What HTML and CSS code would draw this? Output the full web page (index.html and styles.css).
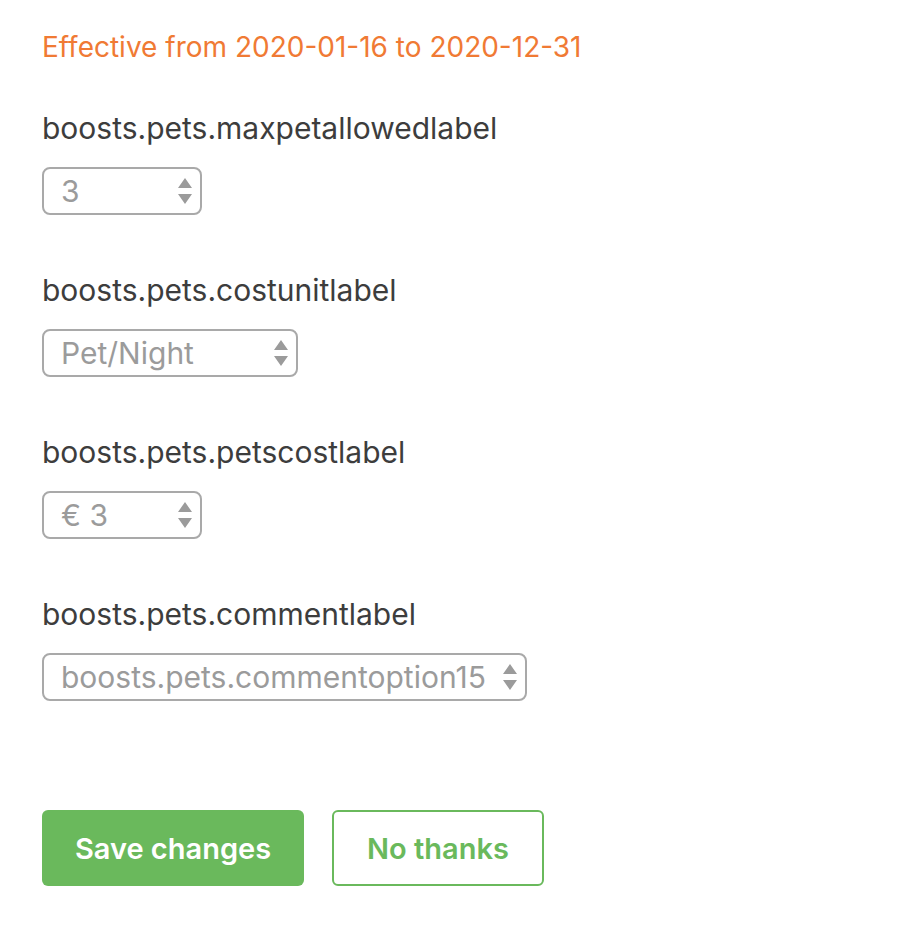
FILE: index.html
```html
<!DOCTYPE html>
<html>
<head>
<meta charset="utf-8">
<link rel="stylesheet" href="styles.css">
</head>
<body>
<div class="page">
  <div class="effective">Effective from 2020-01-16 to 2020-12-31</div>
  <div class="field">
    <div class="label">boosts.pets.maxpetallowedlabel</div>
    <div class="select w1"><span class="value">3</span><span class="arrows"><svg width="14" height="30" viewBox="0 0 14 30"><path d="M7 2 L14 12 L0 12 Z M0 18 L14 18 L7 28 Z" fill="#9b9b9b"/></svg></span></div>
  </div>
  <div class="field">
    <div class="label">boosts.pets.costunitlabel</div>
    <div class="select w2"><span class="value">Pet/Night</span><span class="arrows"><svg width="14" height="30" viewBox="0 0 14 30"><path d="M7 2 L14 12 L0 12 Z M0 18 L14 18 L7 28 Z" fill="#9b9b9b"/></svg></span></div>
  </div>
  <div class="field">
    <div class="label">boosts.pets.petscostlabel</div>
    <div class="select w1"><span class="value">€ 3</span><span class="arrows"><svg width="14" height="30" viewBox="0 0 14 30"><path d="M7 2 L14 12 L0 12 Z M0 18 L14 18 L7 28 Z" fill="#9b9b9b"/></svg></span></div>
  </div>
  <div class="field">
    <div class="label">boosts.pets.commentlabel</div>
    <div class="select w4"><span class="value">boosts.pets.commentoption15</span><span class="arrows"><svg width="14" height="30" viewBox="0 0 14 30"><path d="M7 2 L14 12 L0 12 Z M0 18 L14 18 L7 28 Z" fill="#9b9b9b"/></svg></span></div>
  </div>
  <div class="actions">
    <button class="btn primary">Save changes</button>
    <button class="btn secondary">No thanks</button>
  </div>
</div>
</body>
</html>
```
FILE: styles.css
```css
html, body {
  margin: 0;
  padding: 0;
  background: #ffffff;
}
body {
  font-family: Inter, "Open Sans", sans-serif;
}
.page {
  padding: 29px 0 0 42px;
  display: flex;
  flex-direction: column;
  align-items: flex-start;
}
.effective {
  color: #f07a34;
  font-size: 28px;
  line-height: 36px;
  height: 36px;
}
.field {
  margin-top: 45px;
  display: flex;
  flex-direction: column;
  align-items: flex-start;
}
.field + .field {
  margin-top: 57px;
}
.label {
  color: #3d3d3d;
  font-size: 30px;
  line-height: 36px;
}
.select {
  margin-top: 21px;
  box-sizing: border-box;
  height: 48px;
  border: 2px solid #a9a9a9;
  border-radius: 8px;
  display: flex;
  align-items: center;
  justify-content: space-between;
  padding: 0 8px 0 17px;
  color: #9b9b9b;
  font-size: 30px;
}
.w1 { width: 160px; }
.w2 { width: 256px; }
.w4 { width: 485px; }
.arrows {
  display: flex;
  align-items: center;
}
.arrows svg { display: block; }
.actions {
  margin-top: 109px;
  display: flex;
  gap: 28px;
}
.btn {
  height: 76px;
  border-radius: 6px;
  font-family: Inter, sans-serif;
  font-size: 29px;
  font-weight: 600;
  box-sizing: border-box;
  cursor: pointer;
}
.primary {
  width: 262px;
  background: #6ab95c;
  color: #ffffff;
  border: none;
}
.secondary {
  width: 212px;
  background: #ffffff;
  color: #6ab95c;
  border: 2px solid #6ab95c;
}
```
